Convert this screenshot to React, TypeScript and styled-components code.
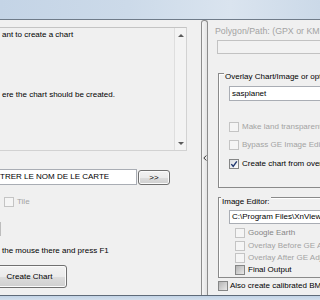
import React from 'react';
import styled, { createGlobalStyle } from 'styled-components';

const GlobalStyle = createGlobalStyle`
  html, body {
    margin: 0;
    padding: 0;
  }
  body {
    background: #f0f0f0;
    font-family: 'Liberation Sans', Arial, sans-serif;
  }
`;

const Window = styled.div`
  width: 320px;
  height: 300px;
  overflow: hidden;
  display: flex;
  flex-direction: column;
  font-size: 8px;
  line-height: 10px;
  color: #000;
`;

const TitleBar = styled.div`
  flex: none;
  height: 19px;
  background: linear-gradient(to right, #c4d4e6 0%, #ccdae9 40%, #dae4ef 72%, #cbd9e8 100%);
  border-bottom: 1px solid #6f7b89;
`;

const Client = styled.div`
  flex: 1;
  min-height: 0;
  display: grid;
  grid-template-columns: 201px 7px 1fr;
  background: #f0f0f0;
`;

const BottomFrame = styled.div`
  flex: none;
  height: 4px;
  border-top: 1px solid #5f6b79;
  background: linear-gradient(#c2d3e6, #d3dfec);
`;

/* left side */

const LeftPane = styled.div`
  min-width: 0;
  overflow: hidden;
  display: flex;
  flex-direction: column;
  align-items: flex-start;
`;

const InfoBox = styled.div`
  margin: 7px 0 0 -3px;
  width: 190px;
  height: 124px;
  box-sizing: border-box;
  border: 1px solid #d2d2d2;
  border-top-color: #c4c4c4;
  display: flex;
`;

const InfoText = styled.div`
  flex: 1;
  padding: 2px 0 0 4px;
  white-space: nowrap;
  overflow: hidden;
`;

const Line = styled.div<{ $top?: number }>`
  margin-top: ${p => p.$top ?? 0}px;
`;

const ScrollBar = styled.div`
  width: 11px;
  border-left: 1px solid #dedede;
  background: #f3f3f3;
  display: flex;
  flex-direction: column;
  justify-content: space-between;
`;

const ArrowBtn = styled.div`
  height: 14px;
  display: flex;
  align-items: center;
  justify-content: center;
`;

const Tri = styled.span<{ $down?: boolean }>`
  width: 0;
  height: 0;
  border-left: 3px solid transparent;
  border-right: 3px solid transparent;
  ${p => (p.$down ? 'border-top: 3px solid #5a5a5a;' : 'border-bottom: 3px solid #5a5a5a;')}
`;

const NameRow = styled.div`
  margin: 18px 0 0 -3px;
  display: flex;
  align-items: flex-start;
  gap: 1px;
`;

const TextBox = styled.div<{ $w: number; $h: number; $muted?: boolean }>`
  width: ${p => p.$w}px;
  height: ${p => p.$h}px;
  box-sizing: border-box;
  border: 1px solid ${p => (p.$muted ? '#c2c2c2' : '#a9adb4')};
  background: ${p => (p.$muted ? '#f2f2f2' : '#fff')};
  padding-left: 2px;
  line-height: ${p => p.$h - 2}px;
  white-space: nowrap;
  overflow: hidden;
`;

const Button = styled.button<{ $w: number; $h: number; $top?: number }>`
  width: ${p => p.$w}px;
  height: ${p => p.$h}px;
  margin-top: ${p => p.$top ?? 0}px;
  box-sizing: border-box;
  padding: 0;
  border: 1px solid #707070;
  border-radius: 3px;
  background: linear-gradient(#f2f2f2 0%, #ebebeb 50%, #dddddd 51%, #cfcfcf 100%);
  box-shadow: inset 0 0 0 1px #fbfbfb;
  font: inherit;
  color: #000;
`;

const HiddenBox = styled.div`
  margin: 15px 0 0 -20px;
  width: 21px;
  height: 14px;
  box-sizing: border-box;
  border: 1px solid #bdbdbd;
  background: #fff;
`;

const HelpText = styled.div`
  margin: 10px 0 0 2px;
  white-space: nowrap;
`;

/* splitter */

const Splitter = styled.div`
  box-sizing: border-box;
  border: 1px solid #8d8d8d;
  border-bottom: none;
  border-radius: 3px 3px 0 0;
  background: linear-gradient(to right, #f6f6f6, #e3e3e3);
  display: flex;
  align-items: center;
  justify-content: center;
`;

/* right side */

const RightPane = styled.div`
  min-width: 0;
  overflow: hidden;
  padding-top: 6px;
  display: flex;
  flex-direction: column;
  align-items: flex-start;
`;

const Muted = styled.div<{ $left?: number }>`
  margin-left: ${p => p.$left ?? 0}px;
  font-size: 8.8px;
  color: #a3a3a3;
  white-space: nowrap;
`;

const Group = styled.div<{ $top: number; $h: number }>`
  position: relative;
  margin: ${p => p.$top}px 0 0 10px;
  width: 140px;
  height: ${p => p.$h}px;
  box-sizing: border-box;
  border: 1px solid #8a8a8a;
  box-shadow: inset 1px 1px 0 #fff;
  display: flex;
  flex-direction: column;
  align-items: flex-start;
`;

const Legend = styled.span<{ $top: number; $left: number }>`
  position: absolute;
  top: ${p => p.$top}px;
  left: ${p => p.$left}px;
  padding: 0 1px;
  background: #f0f0f0;
  white-space: nowrap;
`;

const CheckRow = styled.div<{ $top: number; $left: number; $disabled?: boolean; $dim?: boolean }>`
  margin: ${p => p.$top}px 0 0 ${p => p.$left}px;
  height: 10px;
  display: flex;
  align-items: center;
  gap: 3px;
  white-space: nowrap;
  color: ${p => (p.$dim ? '#868686' : p.$disabled ? '#a3a3a3' : '#000')};
`;

const Box = styled.span<{ $disabled?: boolean; $shaded?: boolean }>`
  flex: none;
  width: 10px;
  height: 10px;
  box-sizing: border-box;
  border: 1px solid ${p => (p.$disabled ? '#c4c4c4' : '#858686')};
  background: ${p =>
    p.$disabled
      ? '#f5f5f5'
      : p.$shaded
      ? 'linear-gradient(135deg, #b4b4b4, #e8e8e8)'
      : 'linear-gradient(135deg, #d9dde2, #fdfdfd)'};
  display: flex;
  align-items: center;
  justify-content: center;
`;

type CheckProps = {
  label: string;
  top: number;
  left: number;
  disabled?: boolean;
  dim?: boolean;
  checked?: boolean;
  shaded?: boolean;
};

const Check = ({ label, top, left, disabled, dim, checked, shaded }: CheckProps) => (
  <CheckRow $top={top} $left={left} $disabled={disabled} $dim={dim}>
    <Box $disabled={disabled || dim} $shaded={shaded}>
      {checked && (
        <svg width="8" height="8" viewBox="0 0 8 8">
          <path d="M1.3 4.1 L3.2 6.3 L6.8 1.4" fill="none" stroke="#1f3770" strokeWidth="1.4" />
        </svg>
      )}
    </Box>
    <span>{label}</span>
  </CheckRow>
);

const Inset = styled.div<{ $top: number }>`
  margin: ${p => p.$top}px 0 0 10px;
`;

export default function App() {
  return (
    <>
      <GlobalStyle />
      <Window>
        <TitleBar />
        <Client>
          <LeftPane>
            <InfoBox>
              <InfoText>
                <Line>ant to create a chart</Line>
                <Line $top={50}>ere the chart should be created.</Line>
              </InfoText>
              <ScrollBar>
                <ArrowBtn>
                  <Tri />
                </ArrowBtn>
                <ArrowBtn>
                  <Tri $down />
                </ArrowBtn>
              </ScrollBar>
            </InfoBox>
            <NameRow>
              <TextBox $w={140} $h={16}>TRER LE NOM DE LE CARTE</TextBox>
              <Button $w={32} $h={15} $top={1}>&gt;&gt;</Button>
            </NameRow>
            <Check label="Tile" top={12} left={4} disabled />
            <HiddenBox />
            <HelpText>the mouse there and press F1</HelpText>
            <Button $w={75} $h={23} $top={9} style={{ marginLeft: -8 }}>
              Create Chart
            </Button>
          </LeftPane>

          <Splitter>
            <svg width="4" height="6" viewBox="0 0 4 6">
              <path d="M3.3 0.5 L0.8 3 L3.3 5.5" fill="none" stroke="#2e2e2e" strokeWidth="1" />
            </svg>
          </Splitter>

          <RightPane>
            <Muted $left={7}>Polygon/Path: (GPX or KML)</Muted>
            <TextBox $w={130} $h={14} $muted style={{ marginTop: 4, marginLeft: 9 }} />

            <Group $top={19} $h={115}>
              <Legend $top={-2} $left={5}>Overlay Chart/Image or optional</Legend>
              <Inset $top={12}>
                <TextBox $w={110} $h={15}>sasplanet</TextBox>
              </Inset>
              <Check label="Make land transparent" top={21} left={10} disabled />
              <Check label="Bypass GE Image Editor" top={8} left={10} disabled />
              <Check label="Create chart from overlay" top={9} left={10} checked />
            </Group>

            <Group $top={9} $h={81}>
              <Legend $top={-1} $left={2}>Image Editor:</Legend>
              <Inset $top={12}>
                <TextBox $w={110} $h={14}>C:\Program Files\XnView\xnview.exe</TextBox>
              </Inset>
              <Check label="Google Earth" top={4} left={16} dim />
              <Check label="Overlay Before GE Adjustment" top={3} left={16} disabled />
              <Check label="Overlay After GE Adjustment" top={2} left={16} disabled />
              <Check label="Final Output" top={2} left={16} shaded />
            </Group>

            <CheckRow $top={3} $left={10} style={{ gap: 2 }}>
              <Box $shaded />
              <span>Also create calibrated BMP</span>
            </CheckRow>
          </RightPane>
        </Client>
        <BottomFrame />
      </Window>
    </>
  );
}
